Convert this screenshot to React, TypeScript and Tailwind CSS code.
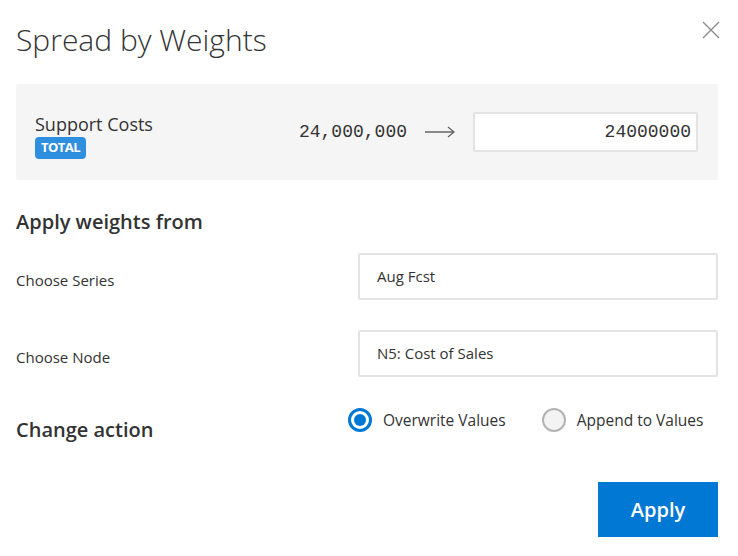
import React from 'react';

const font = { fontFamily: '"Open Sans", "Noto Sans", Arial, sans-serif' };

function Radio({ checked, label }: { checked: boolean; label: string }) {
  return (
    <label className="flex items-center gap-[11px] cursor-pointer">
      {checked ? (
        <span className="w-[24px] h-[24px] rounded-full border-[3px] border-[#0078d4] bg-white flex items-center justify-center">
          <span className="w-[12px] h-[12px] rounded-full bg-[#0078d4]" />
        </span>
      ) : (
        <span className="w-[24px] h-[24px] rounded-full border-2 border-[#b3b3b3] bg-[#f3f3f3]" />
      )}
      <span className="text-[15.5px] leading-[24px] text-[#333]">{label}</span>
    </label>
  );
}

export default function App() {
  return (
    <div className="w-[738px] h-[556px] bg-white pl-4 pr-5 text-[#333]" style={font}>
      {/* header */}
      <div className="flex justify-between items-start h-[84px]">
        <h1 className="mt-[20px] text-[30px] leading-[40px] font-light text-[#333]">Spread by Weights</h1>
        <svg className="mt-[21px] mr-[-2px]" width="18" height="18" viewBox="0 0 18 18">
          <path d="M1 1L17 17M17 1L1 17" stroke="#8a8a8a" strokeWidth="1.3" fill="none" />
        </svg>
      </div>

      {/* value box */}
      <div className="h-[96px] bg-[#f5f5f5] rounded-[3px] flex items-start pt-[28px] pl-[19px] pr-[20px]">
        <div className="flex flex-col items-start">
          <span className="text-[18px] leading-[24px]">Support Costs</span>
          <span className="mt-[1px] w-[51px] h-[22px] rounded-[4px] bg-[#2e8fdf] text-white text-[13px] font-bold flex items-center justify-center tracking-[-0.5px]">
            TOTAL
          </span>
        </div>
        <div className="ml-auto flex items-center gap-[18px]">
          <span className="text-[18px] text-[#333]" style={{ fontFamily: '"Liberation Mono", monospace' }}>
            24,000,000
          </span>
          <svg width="30" height="12" viewBox="0 0 30 12">
            <path d="M0 6H29M23 1L29 6L23 11" stroke="#666" strokeWidth="1.3" fill="none" />
          </svg>
          <div
            className="w-[225px] h-[40px] bg-white border-2 border-[#e3e3e3] rounded-[2px] flex items-center justify-end pr-[5px] text-[18px]"
            style={{ fontFamily: '"Liberation Mono", monospace' }}
          >
            24000000
          </div>
        </div>
      </div>

      <h2 className="mt-[28px] text-[20px] leading-[28px] font-semibold">Apply weights from</h2>

      <div className="mt-[17px] flex items-center justify-between h-[47px]">
        <span className="mt-[7px] text-[15px] leading-[20px]">Choose Series</span>
        <div className="w-[360px] h-[47px] border-2 border-[#e3e3e3] rounded-[2px] flex items-center pl-[17px] text-[15px]">
          Aug Fcst
        </div>
      </div>

      <div className="mt-[30px] flex items-center justify-between h-[47px]">
        <span className="mt-[7px] text-[15px] leading-[20px]">Choose Node</span>
        <div className="w-[360px] h-[47px] border-2 border-[#e3e3e3] rounded-[2px] flex items-center pl-[17px] text-[15px]">
          N5: Cost of Sales
        </div>
      </div>

      <div className="mt-[31px] flex items-start">
        <span className="w-[332px] mt-[8px] text-[20px] leading-[28px] font-semibold">Change action</span>
        <div className="flex items-center gap-[36px]">
          <Radio checked label="Overwrite Values" />
          <Radio checked={false} label="Append to Values" />
        </div>
      </div>

      <div className="mt-[38px] flex justify-end">
        <button className="w-[120px] h-[55px] bg-[#0078d4] text-white text-[20px] font-semibold">Apply</button>
      </div>
    </div>
  );
}
